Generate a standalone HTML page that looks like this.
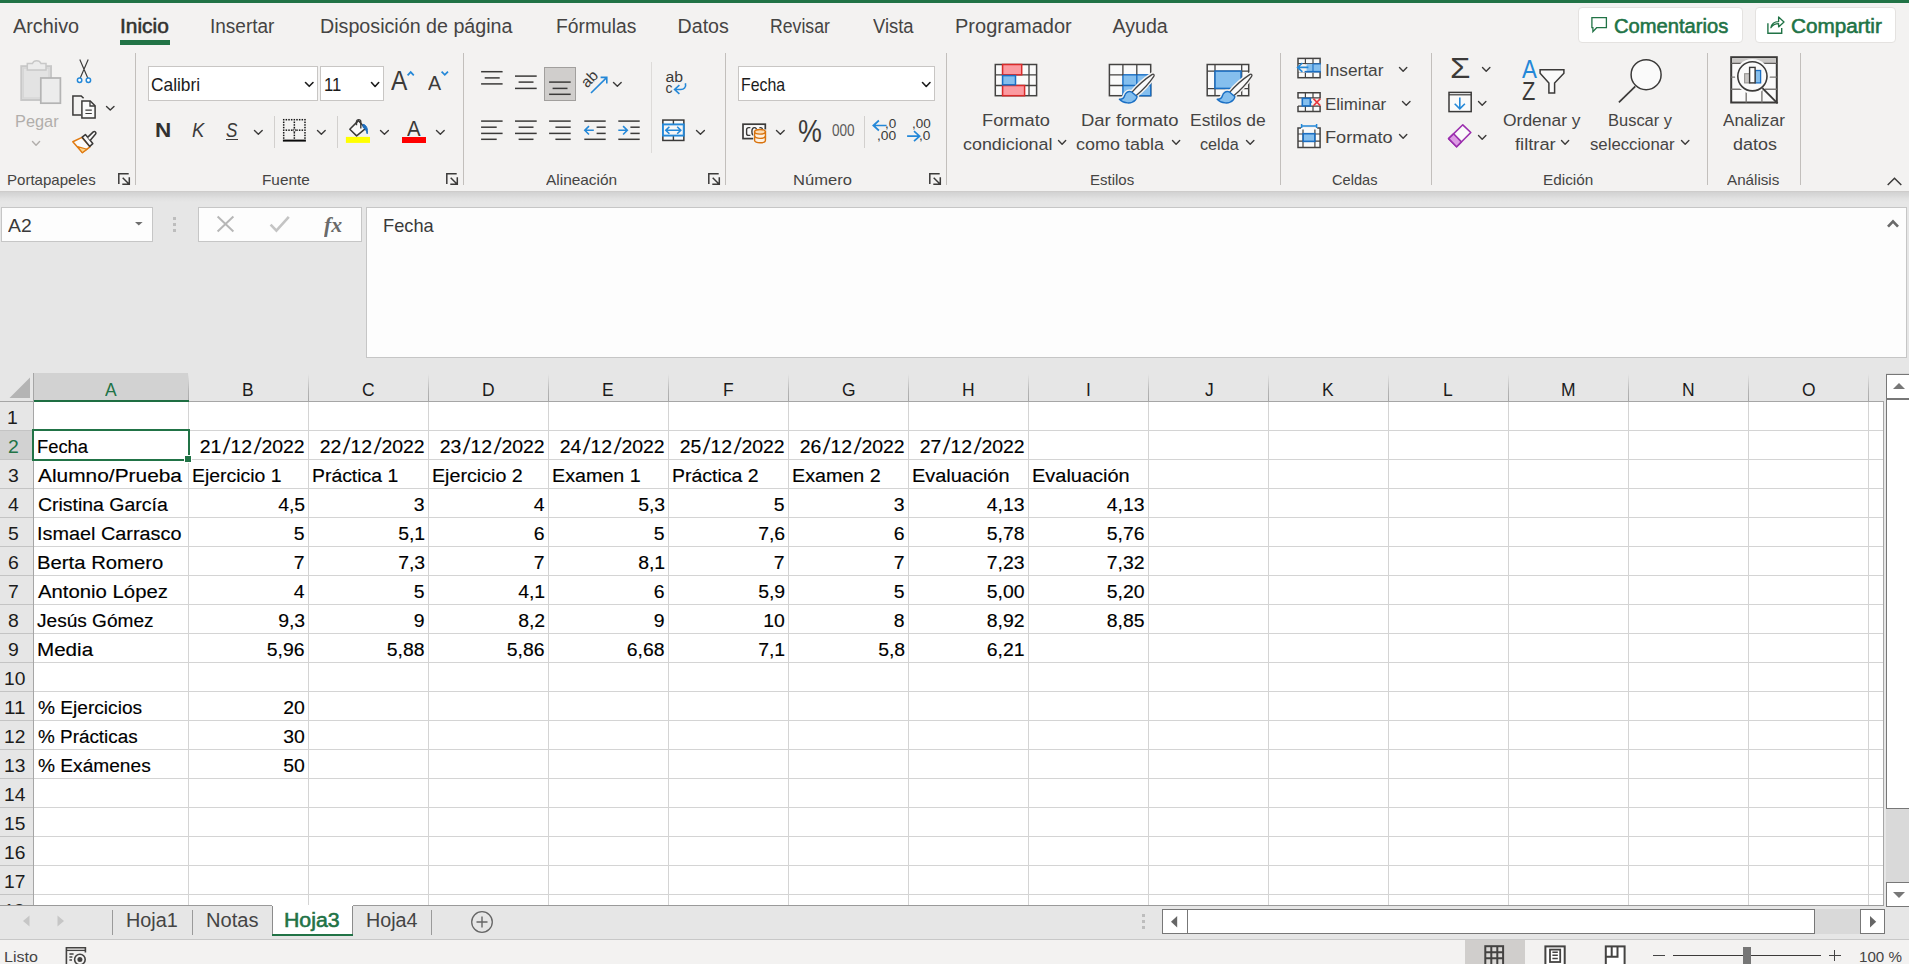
<!DOCTYPE html>
<html lang="es"><head><meta charset="utf-8"><title>Excel</title>
<style>
html,body{margin:0;padding:0;}
body{width:1909px;height:964px;overflow:hidden;position:relative;background:#e6e6e6;font-family:"Liberation Sans", "DejaVu Sans", sans-serif;}
.t{position:absolute;white-space:nowrap;line-height:1;transform-origin:0 0;display:block;}
svg{display:block;}
</style></head><body>
<div style="position:absolute;left:0px;top:0px;width:1909px;height:191px;background:#f3f2f1;"></div>
<div style="position:absolute;left:0px;top:0px;width:1909px;height:3px;background:#217346;"></div>
<div style="position:absolute;left:0px;top:191px;width:1909px;height:11px;background:linear-gradient(#cbc9c7,#d3d3d3 14%,#d9d9d9 40%,#e1e1e1 68%,#e6e6e6);"></div>
<div style="position:absolute;left:120px;top:40px;width:50px;height:5px;background:#217346;"></div>
<div style="position:absolute;left:135px;top:53px;width:1px;height:132px;background:#c2bfbc;"></div>
<div style="position:absolute;left:463px;top:53px;width:1px;height:132px;background:#c2bfbc;"></div>
<div style="position:absolute;left:725px;top:53px;width:1px;height:132px;background:#c2bfbc;"></div>
<div style="position:absolute;left:946px;top:53px;width:1px;height:132px;background:#c2bfbc;"></div>
<div style="position:absolute;left:1280px;top:53px;width:1px;height:132px;background:#c2bfbc;"></div>
<div style="position:absolute;left:1431px;top:53px;width:1px;height:132px;background:#c2bfbc;"></div>
<div style="position:absolute;left:1707px;top:53px;width:1px;height:132px;background:#c2bfbc;"></div>
<div style="position:absolute;left:1800px;top:53px;width:1px;height:132px;background:#c2bfbc;"></div>
<div style="position:absolute;left:651px;top:62px;width:1px;height:91px;background:#dddbd9;"></div>
<div style="position:absolute;left:274px;top:116px;width:1px;height:32px;background:#d2d0ce;"></div>
<div style="position:absolute;left:337px;top:116px;width:1px;height:32px;background:#d2d0ce;"></div>
<div style="position:absolute;left:864px;top:116px;width:1px;height:32px;background:#d2d0ce;"></div>
<div style="position:absolute;left:1578px;top:7px;width:165px;height:36px;background:#ffffff;border:1px solid #e4e2e0;box-sizing:border-box;border-radius:4px;"></div>
<div style="position:absolute;left:1755px;top:7px;width:141px;height:36px;background:#ffffff;border:1px solid #e4e2e0;box-sizing:border-box;border-radius:4px;"></div>
<div style="position:absolute;left:148px;top:66px;width:170px;height:35px;background:#ffffff;border:1px solid #c8c6c4;box-sizing:border-box;"></div>
<div style="position:absolute;left:320px;top:66px;width:64px;height:35px;background:#ffffff;border:1px solid #c8c6c4;box-sizing:border-box;"></div>
<div style="position:absolute;left:738px;top:66px;width:197px;height:35px;background:#ffffff;border:1px solid #c8c6c4;box-sizing:border-box;"></div>
<div style="position:absolute;left:544px;top:67px;width:32px;height:34px;background:#d0cecc;border:1px solid #a19f9d;box-sizing:border-box;"></div>
<div style="position:absolute;left:1px;top:207px;width:152px;height:35px;background:#fdfdfd;border:1px solid #c6c6c6;box-sizing:border-box;"></div>
<div style="position:absolute;left:198px;top:207px;width:164px;height:35px;background:#fdfdfd;border:1px solid #c6c6c6;box-sizing:border-box;"></div>
<div style="position:absolute;left:366px;top:207px;width:1541px;height:151px;background:#fdfdfd;border:1px solid #c6c6c6;box-sizing:border-box;"></div>
<div style="position:absolute;left:173px;top:217px;width:3px;height:3px;background:#bdbdbd;"></div>
<div style="position:absolute;left:173px;top:223px;width:3px;height:3px;background:#bdbdbd;"></div>
<div style="position:absolute;left:173px;top:229px;width:3px;height:3px;background:#bdbdbd;"></div>
<div style="position:absolute;left:33px;top:402px;width:1851px;height:504px;background:#ffffff;"></div>
<div style="position:absolute;left:0px;top:373px;width:1884px;height:29px;background:#e6e6e6;"></div>
<div style="position:absolute;left:0px;top:402px;width:33px;height:504px;background:#e6e6e6;"></div>
<div style="position:absolute;left:34px;top:373px;width:154px;height:27px;background:#d2d2d2;"></div>
<div style="position:absolute;left:0px;top:431px;width:33px;height:28px;background:#d2d2d2;"></div>
<div style="position:absolute;left:188px;top:402px;width:1px;height:503px;background:#d4d4d4;"></div>
<div style="position:absolute;left:188px;top:374px;width:1px;height:28px;background:linear-gradient(#e6e6e6,#b4b4b4 60%,#a8a8a8);"></div>
<div style="position:absolute;left:308px;top:402px;width:1px;height:503px;background:#d4d4d4;"></div>
<div style="position:absolute;left:308px;top:374px;width:1px;height:28px;background:linear-gradient(#e6e6e6,#b4b4b4 60%,#a8a8a8);"></div>
<div style="position:absolute;left:428px;top:402px;width:1px;height:503px;background:#d4d4d4;"></div>
<div style="position:absolute;left:428px;top:374px;width:1px;height:28px;background:linear-gradient(#e6e6e6,#b4b4b4 60%,#a8a8a8);"></div>
<div style="position:absolute;left:548px;top:402px;width:1px;height:503px;background:#d4d4d4;"></div>
<div style="position:absolute;left:548px;top:374px;width:1px;height:28px;background:linear-gradient(#e6e6e6,#b4b4b4 60%,#a8a8a8);"></div>
<div style="position:absolute;left:668px;top:402px;width:1px;height:503px;background:#d4d4d4;"></div>
<div style="position:absolute;left:668px;top:374px;width:1px;height:28px;background:linear-gradient(#e6e6e6,#b4b4b4 60%,#a8a8a8);"></div>
<div style="position:absolute;left:788px;top:402px;width:1px;height:503px;background:#d4d4d4;"></div>
<div style="position:absolute;left:788px;top:374px;width:1px;height:28px;background:linear-gradient(#e6e6e6,#b4b4b4 60%,#a8a8a8);"></div>
<div style="position:absolute;left:908px;top:402px;width:1px;height:503px;background:#d4d4d4;"></div>
<div style="position:absolute;left:908px;top:374px;width:1px;height:28px;background:linear-gradient(#e6e6e6,#b4b4b4 60%,#a8a8a8);"></div>
<div style="position:absolute;left:1028px;top:402px;width:1px;height:503px;background:#d4d4d4;"></div>
<div style="position:absolute;left:1028px;top:374px;width:1px;height:28px;background:linear-gradient(#e6e6e6,#b4b4b4 60%,#a8a8a8);"></div>
<div style="position:absolute;left:1148px;top:402px;width:1px;height:503px;background:#d4d4d4;"></div>
<div style="position:absolute;left:1148px;top:374px;width:1px;height:28px;background:linear-gradient(#e6e6e6,#b4b4b4 60%,#a8a8a8);"></div>
<div style="position:absolute;left:1268px;top:402px;width:1px;height:503px;background:#d4d4d4;"></div>
<div style="position:absolute;left:1268px;top:374px;width:1px;height:28px;background:linear-gradient(#e6e6e6,#b4b4b4 60%,#a8a8a8);"></div>
<div style="position:absolute;left:1388px;top:402px;width:1px;height:503px;background:#d4d4d4;"></div>
<div style="position:absolute;left:1388px;top:374px;width:1px;height:28px;background:linear-gradient(#e6e6e6,#b4b4b4 60%,#a8a8a8);"></div>
<div style="position:absolute;left:1508px;top:402px;width:1px;height:503px;background:#d4d4d4;"></div>
<div style="position:absolute;left:1508px;top:374px;width:1px;height:28px;background:linear-gradient(#e6e6e6,#b4b4b4 60%,#a8a8a8);"></div>
<div style="position:absolute;left:1628px;top:402px;width:1px;height:503px;background:#d4d4d4;"></div>
<div style="position:absolute;left:1628px;top:374px;width:1px;height:28px;background:linear-gradient(#e6e6e6,#b4b4b4 60%,#a8a8a8);"></div>
<div style="position:absolute;left:1748px;top:402px;width:1px;height:503px;background:#d4d4d4;"></div>
<div style="position:absolute;left:1748px;top:374px;width:1px;height:28px;background:linear-gradient(#e6e6e6,#b4b4b4 60%,#a8a8a8);"></div>
<div style="position:absolute;left:1868px;top:402px;width:1px;height:503px;background:#d4d4d4;"></div>
<div style="position:absolute;left:1868px;top:374px;width:1px;height:28px;background:linear-gradient(#e6e6e6,#b4b4b4 60%,#a8a8a8);"></div>
<div style="position:absolute;left:34px;top:430px;width:1850px;height:1px;background:#d4d4d4;"></div>
<div style="position:absolute;left:0px;top:430px;width:33px;height:1px;background:#c4c4c4;"></div>
<div style="position:absolute;left:34px;top:459px;width:1850px;height:1px;background:#d4d4d4;"></div>
<div style="position:absolute;left:0px;top:459px;width:33px;height:1px;background:#c4c4c4;"></div>
<div style="position:absolute;left:34px;top:488px;width:1850px;height:1px;background:#d4d4d4;"></div>
<div style="position:absolute;left:0px;top:488px;width:33px;height:1px;background:#c4c4c4;"></div>
<div style="position:absolute;left:34px;top:517px;width:1850px;height:1px;background:#d4d4d4;"></div>
<div style="position:absolute;left:0px;top:517px;width:33px;height:1px;background:#c4c4c4;"></div>
<div style="position:absolute;left:34px;top:546px;width:1850px;height:1px;background:#d4d4d4;"></div>
<div style="position:absolute;left:0px;top:546px;width:33px;height:1px;background:#c4c4c4;"></div>
<div style="position:absolute;left:34px;top:575px;width:1850px;height:1px;background:#d4d4d4;"></div>
<div style="position:absolute;left:0px;top:575px;width:33px;height:1px;background:#c4c4c4;"></div>
<div style="position:absolute;left:34px;top:604px;width:1850px;height:1px;background:#d4d4d4;"></div>
<div style="position:absolute;left:0px;top:604px;width:33px;height:1px;background:#c4c4c4;"></div>
<div style="position:absolute;left:34px;top:633px;width:1850px;height:1px;background:#d4d4d4;"></div>
<div style="position:absolute;left:0px;top:633px;width:33px;height:1px;background:#c4c4c4;"></div>
<div style="position:absolute;left:34px;top:662px;width:1850px;height:1px;background:#d4d4d4;"></div>
<div style="position:absolute;left:0px;top:662px;width:33px;height:1px;background:#c4c4c4;"></div>
<div style="position:absolute;left:34px;top:691px;width:1850px;height:1px;background:#d4d4d4;"></div>
<div style="position:absolute;left:0px;top:691px;width:33px;height:1px;background:#c4c4c4;"></div>
<div style="position:absolute;left:34px;top:720px;width:1850px;height:1px;background:#d4d4d4;"></div>
<div style="position:absolute;left:0px;top:720px;width:33px;height:1px;background:#c4c4c4;"></div>
<div style="position:absolute;left:34px;top:749px;width:1850px;height:1px;background:#d4d4d4;"></div>
<div style="position:absolute;left:0px;top:749px;width:33px;height:1px;background:#c4c4c4;"></div>
<div style="position:absolute;left:34px;top:778px;width:1850px;height:1px;background:#d4d4d4;"></div>
<div style="position:absolute;left:0px;top:778px;width:33px;height:1px;background:#c4c4c4;"></div>
<div style="position:absolute;left:34px;top:807px;width:1850px;height:1px;background:#d4d4d4;"></div>
<div style="position:absolute;left:0px;top:807px;width:33px;height:1px;background:#c4c4c4;"></div>
<div style="position:absolute;left:34px;top:836px;width:1850px;height:1px;background:#d4d4d4;"></div>
<div style="position:absolute;left:0px;top:836px;width:33px;height:1px;background:#c4c4c4;"></div>
<div style="position:absolute;left:34px;top:865px;width:1850px;height:1px;background:#d4d4d4;"></div>
<div style="position:absolute;left:0px;top:865px;width:33px;height:1px;background:#c4c4c4;"></div>
<div style="position:absolute;left:34px;top:894px;width:1850px;height:1px;background:#d4d4d4;"></div>
<div style="position:absolute;left:0px;top:894px;width:33px;height:1px;background:#c4c4c4;"></div>
<div style="position:absolute;left:0px;top:401px;width:1884px;height:1px;background:#a6a6a6;"></div>
<div style="position:absolute;left:33px;top:373px;width:1px;height:533px;background:#a6a6a6;"></div>
<div style="position:absolute;left:34px;top:400px;width:155px;height:2px;background:#1e6e42;"></div>
<div style="position:absolute;left:32px;top:431px;width:2px;height:28px;background:#1e6e42;"></div>
<div style="position:absolute;left:1883px;top:402px;width:1px;height:504px;background:#a6a6a6;"></div>
<div style="position:absolute;left:0px;top:905px;width:1884px;height:1px;background:#9a9a9a;"></div>
<div style="position:absolute;left:32px;top:429px;width:158px;height:32px;border:2px solid #217346;box-sizing:border-box;"></div>
<div style="position:absolute;left:184px;top:455px;width:8px;height:8px;background:#ffffff;"></div>
<div style="position:absolute;left:185px;top:456px;width:6px;height:6px;background:#217346;"></div>
<div style="position:absolute;left:1886px;top:373px;width:23px;height:534px;background:#d9d9d9;"></div>
<div style="position:absolute;left:1886px;top:374px;width:24px;height:25px;background:#ffffff;border:1px solid #777;box-sizing:border-box;"></div>
<div style="position:absolute;left:1886px;top:399px;width:24px;height:410px;background:#ffffff;border:1px solid #777;box-sizing:border-box;"></div>
<div style="position:absolute;left:1886px;top:882px;width:24px;height:25px;background:#ffffff;border:1px solid #777;box-sizing:border-box;"></div>
<div style="position:absolute;left:0px;top:906px;width:1886px;height:33px;background:#e6e6e6;"></div>
<div style="position:absolute;left:1886px;top:907px;width:23px;height:32px;background:#e6e6e6;"></div>
<div style="position:absolute;left:112px;top:910px;width:1px;height:25px;background:#9a9a9a;"></div>
<div style="position:absolute;left:192px;top:910px;width:1px;height:25px;background:#9a9a9a;"></div>
<div style="position:absolute;left:431px;top:910px;width:1px;height:25px;background:#9a9a9a;"></div>
<div style="position:absolute;left:272px;top:905px;width:81px;height:29px;background:#ffffff;"></div>
<div style="position:absolute;left:272px;top:934px;width:81px;height:2px;background:#217346;"></div>
<div style="position:absolute;left:272px;top:906px;width:1px;height:28px;background:#8c8c8c;"></div>
<div style="position:absolute;left:352px;top:906px;width:1px;height:28px;background:#8c8c8c;"></div>
<div style="position:absolute;left:1142px;top:914px;width:3px;height:3px;background:#bdbdbd;"></div>
<div style="position:absolute;left:1142px;top:920px;width:3px;height:3px;background:#bdbdbd;"></div>
<div style="position:absolute;left:1142px;top:926px;width:3px;height:3px;background:#bdbdbd;"></div>
<div style="position:absolute;left:1187px;top:909px;width:698px;height:25px;background:#d9d9d9;"></div>
<div style="position:absolute;left:1162px;top:909px;width:26px;height:25px;background:#ffffff;border:1px solid #777;box-sizing:border-box;"></div>
<div style="position:absolute;left:1187px;top:909px;width:628px;height:25px;background:#ffffff;border:1px solid #777;box-sizing:border-box;"></div>
<div style="position:absolute;left:1860px;top:909px;width:25px;height:25px;background:#ffffff;border:1px solid #777;box-sizing:border-box;"></div>
<div style="position:absolute;left:0px;top:939px;width:1909px;height:25px;background:#f3f2f1;"></div>
<div style="position:absolute;left:0px;top:939px;width:1909px;height:1px;background:#c8c8c8;"></div>
<div style="position:absolute;left:1465px;top:940px;width:60px;height:24px;background:#d0cecc;"></div>
<div style="position:absolute;left:1673px;top:954.5px;width:148px;height:1.6px;background:#3b3a39;"></div>
<div style="position:absolute;left:1743px;top:947px;width:8px;height:17px;background:#767676;"></div>
<div style="position:absolute;left:1653px;top:955px;width:11.5px;height:1.2px;background:#444;"></div>
<div style="position:absolute;left:1829px;top:955px;width:11.5px;height:1.2px;background:#444;"></div>
<div style="position:absolute;left:1834.2px;top:950px;width:1.2px;height:11.2px;background:#444;"></div>
<div style="position:absolute;left:226px;top:139px;width:12px;height:1.4px;background:#3b3a39;"></div>
<div style="position:absolute;left:401.9px;top:136.9px;width:24.2px;height:6px;background:#ff0000;"></div>
<svg style="position:absolute;left:9px;top:377px;overflow:visible;" width="22" height="22" viewBox="0 0 22 22"><path d="M21 0.5V21H0.5Z" fill="#b4b4b4"/></svg>
<svg style="position:absolute;left:1892.5px;top:383px;overflow:visible;" width="11.5" height="6" viewBox="0 0 11.5 6"><path d="M0 6L6 0L12 6Z" fill="#777"/></svg>
<svg style="position:absolute;left:1892.5px;top:892px;overflow:visible;" width="11.5" height="6" viewBox="0 0 11.5 6"><path d="M0 0L6 6L12 0Z" fill="#777"/></svg>
<svg style="position:absolute;left:1887px;top:219px;overflow:visible;" width="12" height="9" viewBox="0 0 12 9"><path d="M1 7.6L6 2.4L11 7.6" fill="none" stroke="#6a6a6a" stroke-width="2.7"/></svg>
<svg style="position:absolute;left:22px;top:915px;overflow:visible;" width="8" height="12" viewBox="0 0 8 12"><path d="M7.5 0.5L1 6L7.5 11.5Z" fill="#c6c6c6"/></svg>
<svg style="position:absolute;left:57px;top:915px;overflow:visible;" width="8" height="12" viewBox="0 0 8 12"><path d="M0.5 0.5L7 6L0.5 11.5Z" fill="#c6c6c6"/></svg>
<svg style="position:absolute;left:470px;top:910px;overflow:visible;" width="24" height="24" viewBox="0 0 24 24"><circle cx="12" cy="12" r="10.3" fill="none" stroke="#666" stroke-width="1.3"/><path d="M12 6.5V17.5M6.5 12H17.5" stroke="#666" stroke-width="1.4"/></svg>
<svg style="position:absolute;left:1170.5px;top:915.5px;overflow:visible;" width="6.2" height="11.6" viewBox="0 0 6.2 11.6"><path d="M6.2 0L0 5.8L6.2 11.6Z" fill="#666"/></svg>
<svg style="position:absolute;left:1870px;top:915.5px;overflow:visible;" width="6.2" height="11.6" viewBox="0 0 6.2 11.6"><path d="M0 0L6.2 5.8L0 11.6Z" fill="#666"/></svg>
<svg style="position:absolute;left:1484px;top:945px;overflow:visible;clip-path:inset(0 0 0 0);" width="21" height="19" viewBox="0 0 21 19"><rect x="1.3" y="1.2" width="17.8" height="19" fill="#dad8d6" stroke="#444342" stroke-width="2"/><path d="M7.3 1.2V20M13.3 1.2V20M1.3 7.2H19.1M1.3 13.2H19.1" stroke="#444342" stroke-width="2" fill="none"/></svg>
<svg style="position:absolute;left:1544px;top:945px;overflow:visible;clip-path:inset(0 0 0 0);" width="23" height="19" viewBox="0 0 23 19"><rect x="1.4" y="1.4" width="19.3" height="20" fill="#fff" stroke="#444342" stroke-width="2"/><rect x="6" y="4.6" width="10.2" height="12.4" fill="#fff" stroke="#444342" stroke-width="1.8"/><path d="M8.4 7.2H13.8M8.4 10.3H13.8M8.4 13.5H13.8" stroke="#444342" stroke-width="1.5"/></svg>
<svg style="position:absolute;left:1604px;top:945px;overflow:visible;clip-path:inset(0 0 0 0);" width="23" height="19" viewBox="0 0 23 19"><rect x="1.8" y="1.4" width="18.8" height="20" fill="#fff" stroke="#444342" stroke-width="2"/><path d="M7.7 1.4V11.8M13.5 1.4V11.8H1.8" stroke="#444342" stroke-width="2" fill="none"/></svg>
<svg style="position:absolute;left:65px;top:946px;overflow:visible;clip-path:inset(0 0 0 0);" width="23" height="18" viewBox="0 0 23 18"><path d="M1.4 18V1.8H20.4V6.5" fill="none" stroke="#444342" stroke-width="1.6"/><path d="M1.4 4.4H20.4" stroke="#444342" stroke-width="1.3"/><path d="M4.4 8H8.6M4.4 11H7.4M4.4 14H7" stroke="#444342" stroke-width="1.3"/><circle cx="14.9" cy="13.5" r="5.3" fill="#f3f2f1" stroke="#444342" stroke-width="1.6"/><circle cx="14.9" cy="13.5" r="2.5" fill="#444342"/></svg>
<svg style="position:absolute;left:118px;top:173.2px;overflow:visible;" width="12" height="12" viewBox="0 0 12 12"><path d="M0.8 11V0.8H10.7M4.7 4.7L11.2 11.2M11.3 4.3V11.3H4.3" fill="none" stroke="#3b3a39" stroke-width="1.5" stroke-linejoin="miter"/></svg>
<svg style="position:absolute;left:446px;top:173.2px;overflow:visible;" width="12" height="12" viewBox="0 0 12 12"><path d="M0.8 11V0.8H10.7M4.7 4.7L11.2 11.2M11.3 4.3V11.3H4.3" fill="none" stroke="#3b3a39" stroke-width="1.5" stroke-linejoin="miter"/></svg>
<svg style="position:absolute;left:708.2px;top:173.2px;overflow:visible;" width="12" height="12" viewBox="0 0 12 12"><path d="M0.8 11V0.8H10.7M4.7 4.7L11.2 11.2M11.3 4.3V11.3H4.3" fill="none" stroke="#3b3a39" stroke-width="1.5" stroke-linejoin="miter"/></svg>
<svg style="position:absolute;left:929.1px;top:173.2px;overflow:visible;" width="12" height="12" viewBox="0 0 12 12"><path d="M0.8 11V0.8H10.7M4.7 4.7L11.2 11.2M11.3 4.3V11.3H4.3" fill="none" stroke="#3b3a39" stroke-width="1.5" stroke-linejoin="miter"/></svg>
<svg style="position:absolute;left:1887px;top:177px;overflow:visible;" width="15" height="9" viewBox="0 0 15 9"><path d="M0.7 8L7.5 1.2L14.3 8" fill="none" stroke="#3b3a39" stroke-width="1.5"/></svg>
<svg style="position:absolute;left:32.2px;top:141.1px;overflow:visible;" width="8.1" height="4.8" viewBox="0 0 8.1 4.8"><path d="M0.5 0.5L4.05 4.20L7.60 0.5" fill="none" stroke="#b1aeab" stroke-width="1.4" stroke-linecap="round" stroke-linejoin="round"/></svg>
<svg style="position:absolute;left:106.3px;top:106.2px;overflow:visible;" width="8.5" height="4.7" viewBox="0 0 8.5 4.7"><path d="M0.5 0.5L4.25 4.10L8.00 0.5" fill="none" stroke="#3b3a39" stroke-width="1.4" stroke-linecap="round" stroke-linejoin="round"/></svg>
<svg style="position:absolute;left:305.0px;top:82.1px;overflow:visible;" width="8.5" height="4.9" viewBox="0 0 8.5 4.9"><path d="M0.5 0.5L4.25 4.30L8.00 0.5" fill="none" stroke="#1b1b1b" stroke-width="1.6" stroke-linecap="round" stroke-linejoin="round"/></svg>
<svg style="position:absolute;left:371.0px;top:81.9px;overflow:visible;" width="8.2" height="5.1" viewBox="0 0 8.2 5.1"><path d="M0.5 0.5L4.10 4.50L7.70 0.5" fill="none" stroke="#1b1b1b" stroke-width="1.6" stroke-linecap="round" stroke-linejoin="round"/></svg>
<svg style="position:absolute;left:922.0px;top:81.9px;overflow:visible;" width="8.5" height="5.1" viewBox="0 0 8.5 5.1"><path d="M0.5 0.5L4.25 4.50L8.00 0.5" fill="none" stroke="#1b1b1b" stroke-width="1.6" stroke-linecap="round" stroke-linejoin="round"/></svg>
<svg style="position:absolute;left:253.9px;top:130.2px;overflow:visible;" width="8.7" height="4.8" viewBox="0 0 8.7 4.8"><path d="M0.5 0.5L4.35 4.20L8.20 0.5" fill="none" stroke="#3b3a39" stroke-width="1.4" stroke-linecap="round" stroke-linejoin="round"/></svg>
<svg style="position:absolute;left:316.8px;top:130.2px;overflow:visible;" width="8.7" height="4.8" viewBox="0 0 8.7 4.8"><path d="M0.5 0.5L4.35 4.20L8.20 0.5" fill="none" stroke="#3b3a39" stroke-width="1.4" stroke-linecap="round" stroke-linejoin="round"/></svg>
<svg style="position:absolute;left:379.6px;top:130.2px;overflow:visible;" width="8.9" height="4.8" viewBox="0 0 8.9 4.8"><path d="M0.5 0.5L4.45 4.20L8.40 0.5" fill="none" stroke="#3b3a39" stroke-width="1.4" stroke-linecap="round" stroke-linejoin="round"/></svg>
<svg style="position:absolute;left:435.8px;top:130.2px;overflow:visible;" width="8.7" height="4.8" viewBox="0 0 8.7 4.8"><path d="M0.5 0.5L4.35 4.20L8.20 0.5" fill="none" stroke="#3b3a39" stroke-width="1.4" stroke-linecap="round" stroke-linejoin="round"/></svg>
<svg style="position:absolute;left:695.9px;top:130.2px;overflow:visible;" width="8.9" height="4.8" viewBox="0 0 8.9 4.8"><path d="M0.5 0.5L4.45 4.20L8.40 0.5" fill="none" stroke="#3b3a39" stroke-width="1.4" stroke-linecap="round" stroke-linejoin="round"/></svg>
<svg style="position:absolute;left:775.7px;top:130.2px;overflow:visible;" width="8.7" height="4.8" viewBox="0 0 8.7 4.8"><path d="M0.5 0.5L4.35 4.20L8.20 0.5" fill="none" stroke="#3b3a39" stroke-width="1.4" stroke-linecap="round" stroke-linejoin="round"/></svg>
<svg style="position:absolute;left:613.1px;top:81.9px;overflow:visible;" width="8.7" height="4.9" viewBox="0 0 8.7 4.9"><path d="M0.5 0.5L4.35 4.30L8.20 0.5" fill="none" stroke="#3b3a39" stroke-width="1.4" stroke-linecap="round" stroke-linejoin="round"/></svg>
<svg style="position:absolute;left:1058px;top:140.3px;overflow:visible;" width="8.2" height="4.9" viewBox="0 0 8.2 4.9"><path d="M0.5 0.5L4.10 4.30L7.70 0.5" fill="none" stroke="#3b3a39" stroke-width="1.4" stroke-linecap="round" stroke-linejoin="round"/></svg>
<svg style="position:absolute;left:1172px;top:140.3px;overflow:visible;" width="8.2" height="4.9" viewBox="0 0 8.2 4.9"><path d="M0.5 0.5L4.10 4.30L7.70 0.5" fill="none" stroke="#3b3a39" stroke-width="1.4" stroke-linecap="round" stroke-linejoin="round"/></svg>
<svg style="position:absolute;left:1246px;top:140.3px;overflow:visible;" width="8.4" height="4.9" viewBox="0 0 8.4 4.9"><path d="M0.5 0.5L4.20 4.30L7.90 0.5" fill="none" stroke="#3b3a39" stroke-width="1.4" stroke-linecap="round" stroke-linejoin="round"/></svg>
<svg style="position:absolute;left:1561.4px;top:140.3px;overflow:visible;" width="8.2" height="4.9" viewBox="0 0 8.2 4.9"><path d="M0.5 0.5L4.10 4.30L7.70 0.5" fill="none" stroke="#3b3a39" stroke-width="1.4" stroke-linecap="round" stroke-linejoin="round"/></svg>
<svg style="position:absolute;left:1681.4px;top:140.3px;overflow:visible;" width="8.4" height="4.9" viewBox="0 0 8.4 4.9"><path d="M0.5 0.5L4.20 4.30L7.90 0.5" fill="none" stroke="#3b3a39" stroke-width="1.4" stroke-linecap="round" stroke-linejoin="round"/></svg>
<svg style="position:absolute;left:1398.9px;top:66.9px;overflow:visible;" width="8.3" height="4.8" viewBox="0 0 8.3 4.8"><path d="M0.5 0.5L4.15 4.20L7.80 0.5" fill="none" stroke="#3b3a39" stroke-width="1.4" stroke-linecap="round" stroke-linejoin="round"/></svg>
<svg style="position:absolute;left:1401.9px;top:100.5px;overflow:visible;" width="8.5" height="4.8" viewBox="0 0 8.5 4.8"><path d="M0.5 0.5L4.25 4.20L8.00 0.5" fill="none" stroke="#3b3a39" stroke-width="1.4" stroke-linecap="round" stroke-linejoin="round"/></svg>
<svg style="position:absolute;left:1398.9px;top:134.3px;overflow:visible;" width="8.3" height="4.8" viewBox="0 0 8.3 4.8"><path d="M0.5 0.5L4.15 4.20L7.80 0.5" fill="none" stroke="#3b3a39" stroke-width="1.4" stroke-linecap="round" stroke-linejoin="round"/></svg>
<svg style="position:absolute;left:1481.9px;top:66.9px;overflow:visible;" width="8.4" height="4.8" viewBox="0 0 8.4 4.8"><path d="M0.5 0.5L4.20 4.20L7.90 0.5" fill="none" stroke="#3b3a39" stroke-width="1.4" stroke-linecap="round" stroke-linejoin="round"/></svg>
<svg style="position:absolute;left:1478.2px;top:100.9px;overflow:visible;" width="8.4" height="4.8" viewBox="0 0 8.4 4.8"><path d="M0.5 0.5L4.20 4.20L7.90 0.5" fill="none" stroke="#3b3a39" stroke-width="1.4" stroke-linecap="round" stroke-linejoin="round"/></svg>
<svg style="position:absolute;left:1478.2px;top:135.2px;overflow:visible;" width="8.4" height="4.8" viewBox="0 0 8.4 4.8"><path d="M0.5 0.5L4.20 4.20L7.90 0.5" fill="none" stroke="#3b3a39" stroke-width="1.4" stroke-linecap="round" stroke-linejoin="round"/></svg>
<svg style="position:absolute;left:19px;top:58px;overflow:visible;" width="44" height="48" viewBox="0 0 44 48">
<rect x="2.3" y="8.2" width="29.7" height="33.8" fill="#e3e3e3" stroke="#c8c8c8" stroke-width="2"/>
<rect x="4.3" y="10.2" width="25.7" height="29.8" fill="none" stroke="#d6d6d6" stroke-width="1.4"/>
<path d="M8.3 12V5.6H13.4A4.6 4.6 0 0 1 22 5.6H27V12Z" fill="#ececec" stroke="#c8c8c8" stroke-width="1.5"/>
<rect x="21.8" y="20" width="19.6" height="25.2" fill="#ececec" stroke="#b4b4b4" stroke-width="1.7"/>
</svg>
<svg style="position:absolute;left:75px;top:58px;overflow:visible;" width="18" height="26" viewBox="0 0 18 26">
<path d="M4.8 1.6L13.2 21M13.2 1.6L4.8 21" stroke="#3b3a39" stroke-width="1.15" fill="none"/>
<circle cx="4.6" cy="22.3" r="2.2" fill="#fff" stroke="#2488d8" stroke-width="1.5"/>
<circle cx="13.4" cy="22.3" r="2.2" fill="#fff" stroke="#2488d8" stroke-width="1.5"/>
</svg>
<svg style="position:absolute;left:71px;top:94px;overflow:visible;" width="26" height="26" viewBox="0 0 26 26">
<path d="M10.2 21.1H1.9V1.9H10.2L12.6 4.3" fill="none" stroke="#3b3a39" stroke-width="1.5"/>
<path d="M10.9 6.9H19.2L24.1 11.8V24H10.9Z" fill="#fafafa" stroke="#3b3a39" stroke-width="1.5" stroke-linejoin="miter"/>
<path d="M19 7V12H24" fill="none" stroke="#3b3a39" stroke-width="1.3"/>
<path d="M14.4 16.2H20.8M14.4 19.5H20.8" stroke="#3b3a39" stroke-width="1.2"/>
</svg>
<svg style="position:absolute;left:71px;top:130px;overflow:visible;" width="27" height="25" viewBox="0 0 27 25">
<path d="M1.8 11.8L11 7.4L19 16.8L11.3 22.6Z" fill="#fafafa" stroke="#e07a10" stroke-width="1.5" stroke-linejoin="round"/>
<path d="M6.6 16.6L16 19.2L11.3 22.6Z" fill="#fbd58a" stroke="#e07a10" stroke-width="1.1" stroke-linejoin="round"/>
<path d="M11.2 7.2L14.4 4.6L21.8 13.6L18.8 16.4Z" fill="#fafafa" stroke="#3b3a39" stroke-width="1.5" stroke-linejoin="round"/>
<path d="M16.6 7.4L22.3 1.9A1.6 1.6 0 0 1 24.6 4.1L19.3 10.2" fill="#fafafa" stroke="#3b3a39" stroke-width="1.5" stroke-linejoin="round"/>
</svg>
<svg style="position:absolute;left:406.9px;top:71.0px;overflow:visible;" width="7.4" height="5" viewBox="0 0 7.4 5"><path d="M0.6 4.4L3.7 1.1L6.8 4.4" fill="none" stroke="#2488d8" stroke-width="1.7"/></svg>
<svg style="position:absolute;left:440.7px;top:71.3px;overflow:visible;" width="7.6" height="5" viewBox="0 0 7.6 5"><path d="M0.6 0.6L3.8 3.9L7 0.6" fill="none" stroke="#2488d8" stroke-width="1.7"/></svg>
<svg style="position:absolute;left:282px;top:118px;overflow:visible;" width="25" height="25" viewBox="0 0 25 25"><rect x="0.95" y="0.95" width="1.5" height="1.5" fill="#161616"/><rect x="0.95" y="3.57" width="1.5" height="1.5" fill="#161616"/><rect x="0.95" y="6.19" width="1.5" height="1.5" fill="#161616"/><rect x="0.95" y="8.81" width="1.5" height="1.5" fill="#161616"/><rect x="0.95" y="11.43" width="1.5" height="1.5" fill="#161616"/><rect x="0.95" y="14.05" width="1.5" height="1.5" fill="#161616"/><rect x="0.95" y="16.67" width="1.5" height="1.5" fill="#161616"/><rect x="0.95" y="19.29" width="1.5" height="1.5" fill="#161616"/><rect x="3.61" y="0.95" width="1.5" height="1.5" fill="#161616"/><rect x="3.61" y="11.43" width="1.5" height="1.5" fill="#161616"/><rect x="6.27" y="0.95" width="1.5" height="1.5" fill="#161616"/><rect x="6.27" y="11.43" width="1.5" height="1.5" fill="#161616"/><rect x="8.93" y="0.95" width="1.5" height="1.5" fill="#161616"/><rect x="8.93" y="11.43" width="1.5" height="1.5" fill="#161616"/><rect x="11.59" y="0.95" width="1.5" height="1.5" fill="#161616"/><rect x="11.59" y="3.57" width="1.5" height="1.5" fill="#161616"/><rect x="11.59" y="6.19" width="1.5" height="1.5" fill="#161616"/><rect x="11.59" y="8.81" width="1.5" height="1.5" fill="#161616"/><rect x="11.59" y="11.43" width="1.5" height="1.5" fill="#161616"/><rect x="11.59" y="14.05" width="1.5" height="1.5" fill="#161616"/><rect x="11.59" y="16.67" width="1.5" height="1.5" fill="#161616"/><rect x="11.59" y="19.29" width="1.5" height="1.5" fill="#161616"/><rect x="14.25" y="0.95" width="1.5" height="1.5" fill="#161616"/><rect x="14.25" y="11.43" width="1.5" height="1.5" fill="#161616"/><rect x="16.91" y="0.95" width="1.5" height="1.5" fill="#161616"/><rect x="16.91" y="11.43" width="1.5" height="1.5" fill="#161616"/><rect x="19.57" y="0.95" width="1.5" height="1.5" fill="#161616"/><rect x="19.57" y="11.43" width="1.5" height="1.5" fill="#161616"/><rect x="22.23" y="0.95" width="1.5" height="1.5" fill="#161616"/><rect x="22.23" y="3.57" width="1.5" height="1.5" fill="#161616"/><rect x="22.23" y="6.19" width="1.5" height="1.5" fill="#161616"/><rect x="22.23" y="8.81" width="1.5" height="1.5" fill="#161616"/><rect x="22.23" y="11.43" width="1.5" height="1.5" fill="#161616"/><rect x="22.23" y="14.05" width="1.5" height="1.5" fill="#161616"/><rect x="22.23" y="16.67" width="1.5" height="1.5" fill="#161616"/><rect x="22.23" y="19.29" width="1.5" height="1.5" fill="#161616"/><rect x="0.9" y="21.6" width="23" height="2" fill="#0a0a0a"/><circle cx="12.34" cy="12.18" r="1.3" fill="#f3f2f1" stroke="#2b2a29" stroke-width="0.8"/></svg>
<svg style="position:absolute;left:345px;top:118px;overflow:visible;" width="26" height="26" viewBox="0 0 26 26">
<rect x="0.9" y="18.9" width="24.1" height="6" fill="#ffff00"/>
<path d="M4.8 11.2L13.4 2.6L20.4 10.6L11.6 17.9Z" fill="#fafafa" stroke="#3b3a39" stroke-width="1.5" stroke-linejoin="round"/>
<path d="M11.5 7.2V3.8A2.15 2.15 0 0 1 15.8 3.8V10.4" fill="none" stroke="#3b3a39" stroke-width="1.4"/>
<path d="M17.9 6.3C21.8 6.8 23 11.4 22.2 15.8C21.4 12.6 20.2 10.6 18.2 9.6Z" fill="#1e6fc0" stroke="#1e6fc0" stroke-width="1" stroke-linejoin="round"/>
</svg>
<svg style="position:absolute;left:480px;top:68px;overflow:visible;" width="24" height="22" viewBox="0 0 24 22"><path d="M1.10 3.70H22.60" stroke="#3b3a39" stroke-width="1.5"/><path d="M4.70 9.90H19.70" stroke="#3b3a39" stroke-width="1.5"/><path d="M1.10 15.90H22.60" stroke="#3b3a39" stroke-width="1.5"/></svg>
<svg style="position:absolute;left:514px;top:72px;overflow:visible;" width="24" height="22" viewBox="0 0 24 22"><path d="M1.00 4.10H22.70" stroke="#3b3a39" stroke-width="1.5"/><path d="M4.60 10.10H19.50" stroke="#3b3a39" stroke-width="1.5"/><path d="M1.00 16.40H22.70" stroke="#3b3a39" stroke-width="1.5"/></svg>
<svg style="position:absolute;left:548px;top:78px;overflow:visible;" width="24" height="22" viewBox="0 0 24 22"><path d="M1.10 4.10H22.70" stroke="#3b3a39" stroke-width="1.5"/><path d="M4.60 10.40H19.50" stroke="#3b3a39" stroke-width="1.5"/><path d="M1.10 16.30H22.70" stroke="#3b3a39" stroke-width="1.5"/></svg>
<svg style="position:absolute;left:480px;top:118px;overflow:visible;" width="24" height="24" viewBox="0 0 24 24"><path d="M1.10 3.10H22.60" stroke="#3b3a39" stroke-width="1.5"/><path d="M1.10 9.20H16.70" stroke="#3b3a39" stroke-width="1.5"/><path d="M1.10 15.40H22.60" stroke="#3b3a39" stroke-width="1.5"/><path d="M1.10 21.30H16.70" stroke="#3b3a39" stroke-width="1.5"/></svg>
<svg style="position:absolute;left:514px;top:118px;overflow:visible;" width="24" height="24" viewBox="0 0 24 24"><path d="M1.00 3.10H22.70" stroke="#3b3a39" stroke-width="1.5"/><path d="M4.60 9.20H19.50" stroke="#3b3a39" stroke-width="1.5"/><path d="M1.00 15.40H22.70" stroke="#3b3a39" stroke-width="1.5"/><path d="M4.60 21.30H19.50" stroke="#3b3a39" stroke-width="1.5"/></svg>
<svg style="position:absolute;left:548px;top:118px;overflow:visible;" width="24" height="24" viewBox="0 0 24 24"><path d="M1.10 3.10H22.70" stroke="#3b3a39" stroke-width="1.5"/><path d="M7.40 9.20H22.70" stroke="#3b3a39" stroke-width="1.5"/><path d="M1.10 15.40H22.70" stroke="#3b3a39" stroke-width="1.5"/><path d="M7.40 21.30H22.70" stroke="#3b3a39" stroke-width="1.5"/></svg>
<svg style="position:absolute;left:583px;top:118px;overflow:visible;" width="24" height="24" viewBox="0 0 24 24"><path d="M1.30 3.10H22.70" stroke="#3b3a39" stroke-width="1.5"/><path d="M13.60 9.20H22.70" stroke="#3b3a39" stroke-width="1.5"/><path d="M13.60 15.40H22.70" stroke="#3b3a39" stroke-width="1.5"/><path d="M1.30 21.30H22.70" stroke="#3b3a39" stroke-width="1.5"/></svg>
<svg style="position:absolute;left:617px;top:118px;overflow:visible;" width="24" height="24" viewBox="0 0 24 24"><path d="M1.30 3.10H22.70" stroke="#3b3a39" stroke-width="1.5"/><path d="M13.40 9.20H22.70" stroke="#3b3a39" stroke-width="1.5"/><path d="M13.40 15.40H22.70" stroke="#3b3a39" stroke-width="1.5"/><path d="M1.30 21.30H22.70" stroke="#3b3a39" stroke-width="1.5"/></svg>
<svg style="position:absolute;left:584px;top:125px;overflow:visible;" width="11" height="11" viewBox="0 0 11 11"><path d="M0.8 5.3H9.8M5 1.1L0.8 5.3L5 9.5" fill="none" stroke="#2488d8" stroke-width="1.6"/></svg>
<svg style="position:absolute;left:618px;top:125px;overflow:visible;" width="11" height="11" viewBox="0 0 11 11"><path d="M0.3 5.3H9.3M5.1 1.1L9.3 5.3L5.1 9.5" fill="none" stroke="#2488d8" stroke-width="1.6"/></svg>
<svg style="position:absolute;left:582px;top:69px;overflow:visible;" width="28" height="27" viewBox="0 0 28 27">
<text transform="translate(5.0 19.5) rotate(-45)" font-family="Liberation Sans, sans-serif" font-size="15.2" fill="#3b3a39" textLength="17.2" lengthAdjust="spacingAndGlyphs">ab</text>
<path d="M9 24L24.6 8.6M18.6 8.4H24.8V14.6" fill="none" stroke="#2488d8" stroke-width="1.6"/>
</svg>
<svg style="position:absolute;left:664px;top:69px;overflow:visible;" width="24" height="28" viewBox="0 0 24 28">
<text x="1.4" y="12.9" font-family="Liberation Sans, sans-serif" font-size="14" fill="#3b3a39" textLength="17.6" lengthAdjust="spacingAndGlyphs">ab</text>
<text x="1.4" y="24.1" font-family="Liberation Sans, sans-serif" font-size="14" fill="#3b3a39">c</text>
<path d="M21.4 14.2C22.6 18.6 19.6 20.6 16.6 20.5H10.8M15.4 16.2L10.6 20.5L15.4 24.8" fill="none" stroke="#2488d8" stroke-width="1.6"/>
</svg>
<svg style="position:absolute;left:661px;top:118px;overflow:visible;" width="25" height="24" viewBox="0 0 25 24">
<rect x="1.85" y="2.05" width="21.0" height="20.4" fill="#fafafa" stroke="#3b3a39" stroke-width="1.5"/>
<path d="M12.4 2V22.5" stroke="#3b3a39" stroke-width="1.4"/>
<rect x="1.95" y="6.4" width="20.8" height="11.2" fill="#f6f6f6" stroke="#2488d8" stroke-width="1.9"/>
<path d="M5 12.2H19.6M8.4 8.7L4.8 12.2L8.4 15.7M16.2 8.7L19.8 12.2L16.2 15.7" fill="none" stroke="#2488d8" stroke-width="1.6"/>
</svg>
<svg style="position:absolute;left:741px;top:122px;overflow:visible;" width="27" height="22" viewBox="0 0 27 22">
<rect x="2" y="2.2" width="22.3" height="14.4" fill="#fafafa" stroke="#3b3a39" stroke-width="1.7"/>
<path d="M9.4 5.6H7.6A2 2 0 0 0 5.6 7.6V11.4A2 2 0 0 0 7.6 13.4H9.4" fill="none" stroke="#3b3a39" stroke-width="1.4"/>
<ellipse cx="13.4" cy="9.5" rx="2.5" ry="3.9" fill="none" stroke="#3b3a39" stroke-width="1.4"/>
<path d="M18.4 5.6H19.4A2 2 0 0 1 21.4 7.6V9" fill="none" stroke="#3b3a39" stroke-width="1.4"/>
<path d="M12.2 7.4V20.4H25.6V7.4Z" fill="#f3f2f1"/>
<path d="M13.6 9.8V18.4A5.4 2.3 0 0 0 24.4 18.4V9.8Z" fill="#fdf1e2" stroke="#d9730d" stroke-width="1.4"/>
<ellipse cx="19" cy="9.8" rx="5.4" ry="2.3" fill="#fbdcb4" stroke="#d9730d" stroke-width="1.4"/>
<path d="M13.6 14.1A5.4 2.3 0 0 0 24.4 14.1" fill="none" stroke="#d9730d" stroke-width="1.4"/>
</svg>
<svg style="position:absolute;left:872px;top:119px;overflow:visible;" width="16" height="13" viewBox="0 0 16 13"><path d="M1.3 6.5H14.6M6.9 1.5L1.3 6.5L6.9 11.5" fill="none" stroke="#2488d8" stroke-width="1.7"/></svg>
<svg style="position:absolute;left:906px;top:130px;overflow:visible;" width="15" height="13" viewBox="0 0 15 13"><path d="M1.1 6.2H13.4M8 1.2L13.6 6.2L8 11.2" fill="none" stroke="#2488d8" stroke-width="1.7"/></svg>
<svg style="position:absolute;left:994px;top:62px;overflow:visible;" width="46" height="44" viewBox="0 0 46 44">
<rect x="1.3" y="2.5" width="41.3" height="31.2" fill="#fafafa" stroke="#444342" stroke-width="1.5"/>
<path d="M8.6 2.5V33.7M35 2.5V33.7M1.3 12.8H42.6M1.3 23.5H42.6" stroke="#444342" stroke-width="1.3" fill="none"/>
<rect x="8.6" y="2.5" width="19.1" height="10.3" fill="#fb9aa0" stroke="#d92b2b" stroke-width="1.5"/>
<rect x="8.6" y="23.5" width="22" height="10.2" fill="#fb9aa0" stroke="#d92b2b" stroke-width="1.5"/>
<rect x="8.6" y="13.6" width="12.9" height="9.2" fill="#85bfee" stroke="#1a6fc4" stroke-width="1.5"/>
</svg>
<svg style="position:absolute;left:1108px;top:62px;overflow:visible;" width="48" height="44" viewBox="0 0 48 44">
<rect x="1.4" y="2.5" width="41.3" height="31.2" fill="#fafafa" stroke="#444342" stroke-width="1.5"/>
<rect x="14.9" y="12.8" width="27.8" height="20.9" fill="#85bfee" stroke="#1a6fc4" stroke-width="1.4"/>
<path d="M28.8 12.8V33.7M14.9 23.5H42.7" stroke="#1a6fc4" stroke-width="1.4" fill="none"/>
<path d="M14.9 2.5V12.8M28.8 2.5V12.8M1.4 12.8H14.9M1.4 23.5H14.9" stroke="#444342" stroke-width="1.3" fill="none"/>

<path d="M23.6 30.6C30.2 23 37.8 16.6 43.9 12.6C45.5 11.6 46.8 12.8 45.8 14.3C41.6 20.6 35 27.8 27.6 34Z" fill="none" stroke="#f3f2f1" stroke-width="4.2" stroke-linejoin="round"/>
<path d="M23.4 29.8C19.8 28.6 17.2 31 16.6 33.8C16 36 14 37.4 11.4 37.2C15.4 41.6 23.4 42.4 27.4 38C29.4 35.8 29.2 34 28.6 34.2Z" fill="none" stroke="#f3f2f1" stroke-width="4" stroke-linejoin="round"/>
<path d="M23.6 30.6C30.2 23 37.8 16.6 43.9 12.6C45.5 11.6 46.8 12.8 45.8 14.3C41.6 20.6 35 27.8 27.6 34Z" fill="#fafafa" stroke="#444342" stroke-width="1.3" stroke-linejoin="round"/>
<path d="M23.4 29.8C19.8 28.6 17.2 31 16.6 33.8C16 36 14 37.4 11.4 37.2C15.4 41.6 23.4 42.4 27.4 38C29.4 35.8 29.2 34 28.6 34.2Z" fill="#85bfee" stroke="#1a6fc4" stroke-width="1.4" stroke-linejoin="round"/>

</svg>
<svg style="position:absolute;left:1206px;top:62px;overflow:visible;" width="48" height="44" viewBox="0 0 48 44">
<rect x="1.2" y="2.5" width="41.5" height="31.2" fill="#fafafa" stroke="#444342" stroke-width="1.5"/>
<path d="M9 2.5V33.7M35.7 2.5V33.7M1.2 9.1H42.7M1.2 26.7H42.7" stroke="#444342" stroke-width="1.3" fill="none"/>
<rect x="9" y="9.1" width="26" height="17.3" fill="#85bfee" stroke="#1a6fc4" stroke-width="1.5"/>
<g transform="translate(-0.2 0)">
<path d="M23.6 30.6C30.2 23 37.8 16.6 43.9 12.6C45.5 11.6 46.8 12.8 45.8 14.3C41.6 20.6 35 27.8 27.6 34Z" fill="none" stroke="#f3f2f1" stroke-width="4.2" stroke-linejoin="round"/>
<path d="M23.4 29.8C19.8 28.6 17.2 31 16.6 33.8C16 36 14 37.4 11.4 37.2C15.4 41.6 23.4 42.4 27.4 38C29.4 35.8 29.2 34 28.6 34.2Z" fill="none" stroke="#f3f2f1" stroke-width="4" stroke-linejoin="round"/>
<path d="M23.6 30.6C30.2 23 37.8 16.6 43.9 12.6C45.5 11.6 46.8 12.8 45.8 14.3C41.6 20.6 35 27.8 27.6 34Z" fill="#fafafa" stroke="#444342" stroke-width="1.3" stroke-linejoin="round"/>
<path d="M23.4 29.8C19.8 28.6 17.2 31 16.6 33.8C16 36 14 37.4 11.4 37.2C15.4 41.6 23.4 42.4 27.4 38C29.4 35.8 29.2 34 28.6 34.2Z" fill="#85bfee" stroke="#1a6fc4" stroke-width="1.4" stroke-linejoin="round"/>
</g>
</svg>
<svg style="position:absolute;left:1296px;top:56px;overflow:visible;" width="26" height="24" viewBox="0 0 26 24">
<rect x="2" y="2.4" width="22.1" height="19.3" fill="#fafafa" stroke="#444342" stroke-width="1.5"/>
<path d="M9.4 2.4V21.7M17 2.4V21.7M2 7.6H24.1M2 16.2H24.1" stroke="#444342" stroke-width="1.2" fill="none"/>
<rect x="2.8" y="8.2" width="20.6" height="8.4" fill="#f3f2f1"/>
<rect x="10.6" y="7.8" width="14.2" height="8" fill="#85bfee"/>
<path d="M17 7.8V15.8" stroke="#1a6fc4" stroke-width="1.1"/>
<path d="M8.6 15.7H24.9" stroke="#1a6fc4" stroke-width="1.6"/>
<path d="M17.4 7.9H24.9" stroke="#1a6fc4" stroke-width="1.2"/>
<path d="M1.6 11.4H12.4M6.4 7L1.6 11.4L6.4 15.8" fill="none" stroke="#2488d8" stroke-width="1.6"/>
</svg>
<svg style="position:absolute;left:1296px;top:90px;overflow:visible;" width="26" height="24" viewBox="0 0 26 24">
<path d="M2 8.4V2.7H24.1V8.4M2 16V21.6H24.1V16" fill="#fafafa" stroke="#444342" stroke-width="1.5"/>
<path d="M9.4 2.7V7.6M17 2.7V7.6M9.4 16.4V21.6M17 16.4V21.6M2 7.8H24.1M2 16.2H24.1" stroke="#444342" stroke-width="1.2" fill="none"/>
<rect x="6.3" y="8.3" width="8" height="7.6" fill="#85bfee" stroke="#1a6fc4" stroke-width="1.6"/>
<path d="M14.6 10.2L16.2 12.1L14.6 14Z" fill="#1a6fc4"/>
<path d="M17.4 8.6L24.4 15.8M24.4 8.6L17.4 15.8" stroke="#e8353b" stroke-width="1.6" fill="none"/>
</svg>
<svg style="position:absolute;left:1296px;top:123px;overflow:visible;" width="26" height="26" viewBox="0 0 26 26">
<path d="M5 4.9H2V24.4H24.1V4.9H21.2" fill="#fafafa" stroke="#444342" stroke-width="1.5"/>
<path d="M7 6.4V24.4M18.9 6.4V24.4M2 11H24.1M2 18.2H24.1" stroke="#444342" stroke-width="1.2" fill="none"/>
<rect x="7.2" y="10.7" width="11.6" height="7.7" fill="#85bfee" stroke="#1a6fc4" stroke-width="1.6"/>
<path d="M5.6 2.9H20.6M5.6 0.9V5.1M20.6 0.9V5.1" stroke="#2488d8" stroke-width="1.5" fill="none"/>
</svg>
<svg style="position:absolute;left:1447px;top:90px;overflow:visible;" width="26" height="24" viewBox="0 0 26 24">
<rect x="2" y="2.4" width="22.2" height="19.2" fill="#fafafa" stroke="#3b3a39" stroke-width="1.5"/>
<path d="M2 4.8H24.2" stroke="#3b3a39" stroke-width="1.2"/>
<path d="M12.8 7.6V18.6M7.7 13.7L12.8 18.8L17.9 13.7" fill="none" stroke="#2488d8" stroke-width="1.6"/>
</svg>
<svg style="position:absolute;left:1447px;top:123px;overflow:visible;" width="26" height="26" viewBox="0 0 26 26">
<path d="M15.8 1.8L23.8 9.5L9.6 23.8L1.6 15.6Z" fill="#fafafa" stroke="#9b2fae" stroke-width="1.6" stroke-linejoin="round"/>
<path d="M6.6 10.8L14.4 18.9L9.6 23.8L1.6 15.6Z" fill="#dc9be4" stroke="#9b2fae" stroke-width="1.6" stroke-linejoin="round"/>
</svg>
<svg style="position:absolute;left:1539px;top:68px;overflow:visible;" width="26" height="27" viewBox="0 0 26 27"><path d="M1.1 1.8H24.9V5.3L15.6 15.1V25H9.9V15.1L1.1 5.3Z" fill="#fafafa" stroke="#3b3a39" stroke-width="1.5" stroke-linejoin="miter"/></svg>
<svg style="position:absolute;left:1617px;top:58px;overflow:visible;" width="48" height="46" viewBox="0 0 48 46">
<path d="M18.3 28.3L1.9 44.3" stroke="#3b3a39" stroke-width="1.7"/>
<circle cx="29.1" cy="16.7" r="15" fill="#fafafa" stroke="#3b3a39" stroke-width="1.5"/>
</svg>
<svg style="position:absolute;left:1729px;top:55px;overflow:visible;" width="50" height="50" viewBox="0 0 50 50">
<rect x="2.2" y="2.2" width="45.6" height="45.3" fill="#fafafa" stroke="#3b3a39" stroke-width="2"/>
<rect x="3.2" y="3.2" width="43.6" height="4.8" fill="#c8c6c4"/>
<path d="M2.2 8.4H47.8" stroke="#605e5c" stroke-width="1.4"/>
<path d="M2.2 22.1H47.8M2.2 34.2H47.8M17.2 34.2V47.5M32.9 34.2V47.5" stroke="#7a7876" stroke-width="1.4" fill="none"/>
<circle cx="23.4" cy="21.3" r="17.4" fill="#fafafa"/>
<path d="M33.4 33.1L48.6 48.3" stroke="#3b3a39" stroke-width="1.9"/>
<circle cx="23.4" cy="21.3" r="14.6" fill="#fafafa" stroke="#3b3a39" stroke-width="1.6"/>
<rect x="15.6" y="18.7" width="5" height="9.2" fill="#c8c6c4" stroke="#979593" stroke-width="1.1"/>
<rect x="26.2" y="15.5" width="5.4" height="12.4" fill="#85bfee" stroke="#1a6fc4" stroke-width="1.3"/>
<rect x="20.6" y="12.4" width="5.5" height="15.5" fill="#ffffff" stroke="#3b3a39" stroke-width="1.4"/>
</svg>
<svg style="position:absolute;left:1590px;top:16px;overflow:visible;" width="18" height="18" viewBox="0 0 18 18"><path d="M1.9 1.6H16.4V11.7H6.6L2.9 15.7V11.7H1.9Z" fill="none" stroke="#217346" stroke-width="1.3" stroke-linejoin="miter"/></svg>
<svg style="position:absolute;left:1766px;top:15px;overflow:visible;" width="20" height="20" viewBox="0 0 20 20">
<path d="M1.9 8.2V18.3H15.7V13" fill="none" stroke="#217346" stroke-width="1.4"/>
<path d="M4.9 12.8C5.6 8.6 8.6 6.6 12.6 6.6V1.9L18 6.9L12.6 11.9V8.6C9.4 8.6 6.6 9.8 4.9 12.8Z" fill="none" stroke="#217346" stroke-width="1.3" stroke-linejoin="round"/>
</svg>
<svg style="position:absolute;left:216px;top:215px;overflow:visible;" width="19" height="18" viewBox="0 0 19 18"><path d="M1.6 1.6L17.4 16.4M17.4 1.6L1.6 16.4" stroke="#b7b7b7" stroke-width="2" fill="none"/></svg>
<svg style="position:absolute;left:269px;top:215px;overflow:visible;" width="22" height="18" viewBox="0 0 22 18"><path d="M1.6 9.6L7.4 15.6L19.8 1.8" stroke="#c4c4c4" stroke-width="2.6" fill="none"/></svg>
<svg style="position:absolute;left:134.5px;top:222px;overflow:visible;" width="8" height="4" viewBox="0 0 8 4"><path d="M0 0H7.6L3.8 3.6Z" fill="#6e6e6e"/></svg>
<span class="t" style="right:1604.20px;top:438px;font-size:18.8px;color:#000000;-webkit-text-stroke:0.15px #000;transform-origin:100% 0;transform:scaleX(1.033);">21<span style="display:inline-block;margin:0 1.9px;transform:skewX(-8deg) scaleY(1.22);transform-origin:50% 60%">/</span>12<span style="display:inline-block;margin:0 1.9px;transform:skewX(-8deg) scaleY(1.22);transform-origin:50% 60%">/</span>2022</span>
<span class="t" style="right:1484.20px;top:438px;font-size:18.8px;color:#000000;-webkit-text-stroke:0.15px #000;transform-origin:100% 0;transform:scaleX(1.033);">22<span style="display:inline-block;margin:0 1.9px;transform:skewX(-8deg) scaleY(1.22);transform-origin:50% 60%">/</span>12<span style="display:inline-block;margin:0 1.9px;transform:skewX(-8deg) scaleY(1.22);transform-origin:50% 60%">/</span>2022</span>
<span class="t" style="right:1364.20px;top:438px;font-size:18.8px;color:#000000;-webkit-text-stroke:0.15px #000;transform-origin:100% 0;transform:scaleX(1.033);">23<span style="display:inline-block;margin:0 1.9px;transform:skewX(-8deg) scaleY(1.22);transform-origin:50% 60%">/</span>12<span style="display:inline-block;margin:0 1.9px;transform:skewX(-8deg) scaleY(1.22);transform-origin:50% 60%">/</span>2022</span>
<span class="t" style="right:1244.20px;top:438px;font-size:18.8px;color:#000000;-webkit-text-stroke:0.15px #000;transform-origin:100% 0;transform:scaleX(1.033);">24<span style="display:inline-block;margin:0 1.9px;transform:skewX(-8deg) scaleY(1.22);transform-origin:50% 60%">/</span>12<span style="display:inline-block;margin:0 1.9px;transform:skewX(-8deg) scaleY(1.22);transform-origin:50% 60%">/</span>2022</span>
<span class="t" style="right:1124.20px;top:438px;font-size:18.8px;color:#000000;-webkit-text-stroke:0.15px #000;transform-origin:100% 0;transform:scaleX(1.033);">25<span style="display:inline-block;margin:0 1.9px;transform:skewX(-8deg) scaleY(1.22);transform-origin:50% 60%">/</span>12<span style="display:inline-block;margin:0 1.9px;transform:skewX(-8deg) scaleY(1.22);transform-origin:50% 60%">/</span>2022</span>
<span class="t" style="right:1004.20px;top:438px;font-size:18.8px;color:#000000;-webkit-text-stroke:0.15px #000;transform-origin:100% 0;transform:scaleX(1.033);">26<span style="display:inline-block;margin:0 1.9px;transform:skewX(-8deg) scaleY(1.22);transform-origin:50% 60%">/</span>12<span style="display:inline-block;margin:0 1.9px;transform:skewX(-8deg) scaleY(1.22);transform-origin:50% 60%">/</span>2022</span>
<span class="t" style="right:884.20px;top:438px;font-size:18.8px;color:#000000;-webkit-text-stroke:0.15px #000;transform-origin:100% 0;transform:scaleX(1.033);">27<span style="display:inline-block;margin:0 1.9px;transform:skewX(-8deg) scaleY(1.22);transform-origin:50% 60%">/</span>12<span style="display:inline-block;margin:0 1.9px;transform:skewX(-8deg) scaleY(1.22);transform-origin:50% 60%">/</span>2022</span>
<span class="t" style="right:1604.20px;top:496px;font-size:18.8px;color:#000000;-webkit-text-stroke:0.15px #000;transform-origin:100% 0;transform:scaleX(1.033);">4,5</span>
<span class="t" style="right:1484.20px;top:496px;font-size:18.8px;color:#000000;-webkit-text-stroke:0.15px #000;transform-origin:100% 0;transform:scaleX(1.033);">3</span>
<span class="t" style="right:1364.20px;top:496px;font-size:18.8px;color:#000000;-webkit-text-stroke:0.15px #000;transform-origin:100% 0;transform:scaleX(1.033);">4</span>
<span class="t" style="right:1244.20px;top:496px;font-size:18.8px;color:#000000;-webkit-text-stroke:0.15px #000;transform-origin:100% 0;transform:scaleX(1.033);">5,3</span>
<span class="t" style="right:1124.20px;top:496px;font-size:18.8px;color:#000000;-webkit-text-stroke:0.15px #000;transform-origin:100% 0;transform:scaleX(1.033);">5</span>
<span class="t" style="right:1004.20px;top:496px;font-size:18.8px;color:#000000;-webkit-text-stroke:0.15px #000;transform-origin:100% 0;transform:scaleX(1.033);">3</span>
<span class="t" style="right:884.20px;top:496px;font-size:18.8px;color:#000000;-webkit-text-stroke:0.15px #000;transform-origin:100% 0;transform:scaleX(1.033);">4,13</span>
<span class="t" style="right:764.20px;top:496px;font-size:18.8px;color:#000000;-webkit-text-stroke:0.15px #000;transform-origin:100% 0;transform:scaleX(1.033);">4,13</span>
<span class="t" style="right:1604.20px;top:525px;font-size:18.8px;color:#000000;-webkit-text-stroke:0.15px #000;transform-origin:100% 0;transform:scaleX(1.033);">5</span>
<span class="t" style="right:1484.20px;top:525px;font-size:18.8px;color:#000000;-webkit-text-stroke:0.15px #000;transform-origin:100% 0;transform:scaleX(1.033);">5,1</span>
<span class="t" style="right:1364.20px;top:525px;font-size:18.8px;color:#000000;-webkit-text-stroke:0.15px #000;transform-origin:100% 0;transform:scaleX(1.033);">6</span>
<span class="t" style="right:1244.20px;top:525px;font-size:18.8px;color:#000000;-webkit-text-stroke:0.15px #000;transform-origin:100% 0;transform:scaleX(1.033);">5</span>
<span class="t" style="right:1124.20px;top:525px;font-size:18.8px;color:#000000;-webkit-text-stroke:0.15px #000;transform-origin:100% 0;transform:scaleX(1.033);">7,6</span>
<span class="t" style="right:1004.20px;top:525px;font-size:18.8px;color:#000000;-webkit-text-stroke:0.15px #000;transform-origin:100% 0;transform:scaleX(1.033);">6</span>
<span class="t" style="right:884.20px;top:525px;font-size:18.8px;color:#000000;-webkit-text-stroke:0.15px #000;transform-origin:100% 0;transform:scaleX(1.033);">5,78</span>
<span class="t" style="right:764.20px;top:525px;font-size:18.8px;color:#000000;-webkit-text-stroke:0.15px #000;transform-origin:100% 0;transform:scaleX(1.033);">5,76</span>
<span class="t" style="right:1604.20px;top:554px;font-size:18.8px;color:#000000;-webkit-text-stroke:0.15px #000;transform-origin:100% 0;transform:scaleX(1.033);">7</span>
<span class="t" style="right:1484.20px;top:554px;font-size:18.8px;color:#000000;-webkit-text-stroke:0.15px #000;transform-origin:100% 0;transform:scaleX(1.033);">7,3</span>
<span class="t" style="right:1364.20px;top:554px;font-size:18.8px;color:#000000;-webkit-text-stroke:0.15px #000;transform-origin:100% 0;transform:scaleX(1.033);">7</span>
<span class="t" style="right:1244.20px;top:554px;font-size:18.8px;color:#000000;-webkit-text-stroke:0.15px #000;transform-origin:100% 0;transform:scaleX(1.033);">8,1</span>
<span class="t" style="right:1124.20px;top:554px;font-size:18.8px;color:#000000;-webkit-text-stroke:0.15px #000;transform-origin:100% 0;transform:scaleX(1.033);">7</span>
<span class="t" style="right:1004.20px;top:554px;font-size:18.8px;color:#000000;-webkit-text-stroke:0.15px #000;transform-origin:100% 0;transform:scaleX(1.033);">7</span>
<span class="t" style="right:884.20px;top:554px;font-size:18.8px;color:#000000;-webkit-text-stroke:0.15px #000;transform-origin:100% 0;transform:scaleX(1.033);">7,23</span>
<span class="t" style="right:764.20px;top:554px;font-size:18.8px;color:#000000;-webkit-text-stroke:0.15px #000;transform-origin:100% 0;transform:scaleX(1.033);">7,32</span>
<span class="t" style="right:1604.20px;top:583px;font-size:18.8px;color:#000000;-webkit-text-stroke:0.15px #000;transform-origin:100% 0;transform:scaleX(1.033);">4</span>
<span class="t" style="right:1484.20px;top:583px;font-size:18.8px;color:#000000;-webkit-text-stroke:0.15px #000;transform-origin:100% 0;transform:scaleX(1.033);">5</span>
<span class="t" style="right:1364.20px;top:583px;font-size:18.8px;color:#000000;-webkit-text-stroke:0.15px #000;transform-origin:100% 0;transform:scaleX(1.033);">4,1</span>
<span class="t" style="right:1244.20px;top:583px;font-size:18.8px;color:#000000;-webkit-text-stroke:0.15px #000;transform-origin:100% 0;transform:scaleX(1.033);">6</span>
<span class="t" style="right:1124.20px;top:583px;font-size:18.8px;color:#000000;-webkit-text-stroke:0.15px #000;transform-origin:100% 0;transform:scaleX(1.033);">5,9</span>
<span class="t" style="right:1004.20px;top:583px;font-size:18.8px;color:#000000;-webkit-text-stroke:0.15px #000;transform-origin:100% 0;transform:scaleX(1.033);">5</span>
<span class="t" style="right:884.20px;top:583px;font-size:18.8px;color:#000000;-webkit-text-stroke:0.15px #000;transform-origin:100% 0;transform:scaleX(1.033);">5,00</span>
<span class="t" style="right:764.20px;top:583px;font-size:18.8px;color:#000000;-webkit-text-stroke:0.15px #000;transform-origin:100% 0;transform:scaleX(1.033);">5,20</span>
<span class="t" style="right:1604.20px;top:612px;font-size:18.8px;color:#000000;-webkit-text-stroke:0.15px #000;transform-origin:100% 0;transform:scaleX(1.033);">9,3</span>
<span class="t" style="right:1484.20px;top:612px;font-size:18.8px;color:#000000;-webkit-text-stroke:0.15px #000;transform-origin:100% 0;transform:scaleX(1.033);">9</span>
<span class="t" style="right:1364.20px;top:612px;font-size:18.8px;color:#000000;-webkit-text-stroke:0.15px #000;transform-origin:100% 0;transform:scaleX(1.033);">8,2</span>
<span class="t" style="right:1244.20px;top:612px;font-size:18.8px;color:#000000;-webkit-text-stroke:0.15px #000;transform-origin:100% 0;transform:scaleX(1.033);">9</span>
<span class="t" style="right:1124.20px;top:612px;font-size:18.8px;color:#000000;-webkit-text-stroke:0.15px #000;transform-origin:100% 0;transform:scaleX(1.033);">10</span>
<span class="t" style="right:1004.20px;top:612px;font-size:18.8px;color:#000000;-webkit-text-stroke:0.15px #000;transform-origin:100% 0;transform:scaleX(1.033);">8</span>
<span class="t" style="right:884.20px;top:612px;font-size:18.8px;color:#000000;-webkit-text-stroke:0.15px #000;transform-origin:100% 0;transform:scaleX(1.033);">8,92</span>
<span class="t" style="right:764.20px;top:612px;font-size:18.8px;color:#000000;-webkit-text-stroke:0.15px #000;transform-origin:100% 0;transform:scaleX(1.033);">8,85</span>
<span class="t" style="right:1604.20px;top:641px;font-size:18.8px;color:#000000;-webkit-text-stroke:0.15px #000;transform-origin:100% 0;transform:scaleX(1.033);">5,96</span>
<span class="t" style="right:1484.20px;top:641px;font-size:18.8px;color:#000000;-webkit-text-stroke:0.15px #000;transform-origin:100% 0;transform:scaleX(1.033);">5,88</span>
<span class="t" style="right:1364.20px;top:641px;font-size:18.8px;color:#000000;-webkit-text-stroke:0.15px #000;transform-origin:100% 0;transform:scaleX(1.033);">5,86</span>
<span class="t" style="right:1244.20px;top:641px;font-size:18.8px;color:#000000;-webkit-text-stroke:0.15px #000;transform-origin:100% 0;transform:scaleX(1.033);">6,68</span>
<span class="t" style="right:1124.20px;top:641px;font-size:18.8px;color:#000000;-webkit-text-stroke:0.15px #000;transform-origin:100% 0;transform:scaleX(1.033);">7,1</span>
<span class="t" style="right:1004.20px;top:641px;font-size:18.8px;color:#000000;-webkit-text-stroke:0.15px #000;transform-origin:100% 0;transform:scaleX(1.033);">5,8</span>
<span class="t" style="right:884.20px;top:641px;font-size:18.8px;color:#000000;-webkit-text-stroke:0.15px #000;transform-origin:100% 0;transform:scaleX(1.033);">6,21</span>
<span class="t" style="right:1604.20px;top:699px;font-size:18.8px;color:#000000;-webkit-text-stroke:0.15px #000;transform-origin:100% 0;transform:scaleX(1.033);">20</span>
<span class="t" style="right:1604.20px;top:728px;font-size:18.8px;color:#000000;-webkit-text-stroke:0.15px #000;transform-origin:100% 0;transform:scaleX(1.033);">30</span>
<span class="t" style="right:1604.20px;top:757px;font-size:18.8px;color:#000000;-webkit-text-stroke:0.15px #000;transform-origin:100% 0;transform:scaleX(1.033);">50</span>
<div style="position:absolute;left:0;top:895px;width:33px;height:10px;overflow:hidden;"><span class="t" style="left:4.3px;top:7px;font-size:18.8px;color:#262626;transform:scaleX(0.97);">18</span></div>
<span class="t" style="left:13.30px;top:17px;font-size:19.6px;color:#454443;transform:scaleX(1.0116);">Archivo</span>
<span class="t" style="left:209.73px;top:17px;font-size:19.6px;color:#454443;transform:scaleX(0.9696);">Insertar</span>
<span class="t" style="left:319.60px;top:17px;font-size:19.6px;color:#454443;transform:scaleX(1.0041);">Disposición de página</span>
<span class="t" style="left:556.42px;top:17px;font-size:19.6px;color:#454443;transform:scaleX(0.9832);">Fórmulas</span>
<span class="t" style="left:677.60px;top:17px;font-size:19.6px;color:#454443;">Datos</span>
<span class="t" style="left:770.00px;top:17px;font-size:19.6px;color:#454443;transform:scaleX(0.9015);">Revisar</span>
<span class="t" style="left:872.80px;top:17px;font-size:19.6px;color:#454443;transform:scaleX(0.9398);">Vista</span>
<span class="t" style="left:954.58px;top:17px;font-size:19.6px;color:#454443;transform:scaleX(1.0209);">Programador</span>
<span class="t" style="left:1112.50px;top:17px;font-size:19.6px;color:#454443;">Ayuda</span>
<span class="t" style="left:119.63px;top:17px;font-size:19.6px;color:#323130;transform:scaleX(1.0659);-webkit-text-stroke:0.55px #323130;">Inicio</span>
<span class="t" style="left:1613.77px;top:17px;font-size:19.6px;color:#217346;transform:scaleX(1.0292);-webkit-text-stroke:0.55px #217346;">Comentarios</span>
<span class="t" style="left:1790.74px;top:17px;font-size:19.6px;color:#217346;transform:scaleX(1.0563);-webkit-text-stroke:0.55px #217346;">Compartir</span>
<span class="t" style="left:15.03px;top:114px;font-size:16.8px;color:#b1aeab;transform:scaleX(0.9730);">Pegar</span>
<span class="t" style="left:981.51px;top:113px;font-size:16.8px;color:#454443;transform:scaleX(1.0859);">Formato</span>
<span class="t" style="left:962.60px;top:137px;font-size:16.8px;color:#454443;transform:scaleX(1.0657);">condicional</span>
<span class="t" style="left:1080.90px;top:113px;font-size:16.8px;color:#454443;transform:scaleX(1.1002);">Dar formato</span>
<span class="t" style="left:1076.40px;top:137px;font-size:16.8px;color:#454443;transform:scaleX(1.0706);">como tabla</span>
<span class="t" style="left:1189.96px;top:113px;font-size:16.8px;color:#454443;transform:scaleX(1.0403);">Estilos de</span>
<span class="t" style="left:1199.70px;top:137px;font-size:16.8px;color:#454443;transform:scaleX(0.9660);">celda</span>
<span class="t" style="left:1324.97px;top:63px;font-size:16.8px;color:#454443;transform:scaleX(1.0266);">Insertar</span>
<span class="t" style="left:1324.99px;top:97px;font-size:16.8px;color:#454443;transform:scaleX(1.0096);">Eliminar</span>
<span class="t" style="left:1324.92px;top:130px;font-size:16.8px;color:#454443;transform:scaleX(1.0827);">Formato</span>
<span class="t" style="left:1503.40px;top:113px;font-size:16.8px;color:#454443;transform:scaleX(1.0396);">Ordenar y</span>
<span class="t" style="left:1514.90px;top:137px;font-size:16.8px;color:#454443;transform:scaleX(1.0901);">filtrar</span>
<span class="t" style="left:1608.02px;top:113px;font-size:16.8px;color:#454443;transform:scaleX(0.9817);">Buscar y</span>
<span class="t" style="left:1589.70px;top:137px;font-size:16.8px;color:#454443;transform:scaleX(0.9966);">seleccionar</span>
<span class="t" style="left:1723.20px;top:113px;font-size:16.8px;color:#454443;transform:scaleX(1.0207);">Analizar</span>
<span class="t" style="left:1732.60px;top:137px;font-size:16.8px;color:#454443;transform:scaleX(1.0698);">datos</span>
<span class="t" style="left:6.88px;top:173px;font-size:14.8px;color:#454443;transform:scaleX(1.0175);">Portapapeles</span>
<span class="t" style="left:262.46px;top:173px;font-size:14.8px;color:#454443;transform:scaleX(1.0371);">Fuente</span>
<span class="t" style="left:546.40px;top:173px;font-size:14.8px;color:#454443;transform:scaleX(1.0419);">Alineación</span>
<span class="t" style="left:793.28px;top:173px;font-size:14.8px;color:#454443;transform:scaleX(1.1187);">Número</span>
<span class="t" style="left:1090.49px;top:173px;font-size:14.8px;color:#454443;transform:scaleX(1.0146);">Estilos</span>
<span class="t" style="left:1332.30px;top:173px;font-size:14.8px;color:#454443;transform:scaleX(0.9877);">Celdas</span>
<span class="t" style="left:1543.36px;top:173px;font-size:14.8px;color:#454443;transform:scaleX(1.0359);">Edición</span>
<span class="t" style="left:1727.40px;top:173px;font-size:14.8px;color:#454443;transform:scaleX(1.0259);">Análisis</span>
<span class="t" style="left:151.40px;top:76px;font-size:18.4px;color:#1b1b1b;transform:scaleX(0.9425);">Calibri</span>
<span class="t" style="left:323.89px;top:76px;font-size:18.4px;color:#1b1b1b;transform:scaleX(0.9069);">11</span>
<span class="t" style="left:740.74px;top:76px;font-size:18.4px;color:#1b1b1b;transform:scaleX(0.8627);">Fecha</span>
<span class="t" style="left:154.78px;top:120px;font-size:20px;color:#323130;font-weight:700;transform:scaleX(1.1231);">N</span>
<span class="t" style="left:191.60px;top:121px;font-size:19.5px;color:#3b3a39;font-style:italic;transform:scaleX(0.9429);">K</span>
<span class="t" style="left:226.30px;top:121px;font-size:19.5px;color:#3b3a39;font-style:italic;transform:scaleX(0.8769);">S</span>
<span class="t" style="left:8.00px;top:217px;font-size:18.4px;color:#3a3a3a;transform:scaleX(1.0509);">A2</span>
<span class="t" style="left:383.01px;top:217px;font-size:18.4px;color:#3a3a3a;transform:scaleX(0.9924);">Fecha</span>
<span class="t" style="left:324.40px;top:214px;font-size:22px;color:#6a6a6a;font-weight:700;font-style:italic;font-family:'Liberation Serif', 'DejaVu Serif', serif;transform:scaleX(0.9877);">fx</span>
<span class="t" style="left:125.68px;top:911px;font-size:19.4px;color:#444;transform:scaleX(1.0229);">Hoja1</span>
<span class="t" style="left:205.76px;top:911px;font-size:19.4px;color:#444;transform:scaleX(1.0356);">Notas</span>
<span class="t" style="left:284.10px;top:911px;font-size:19.4px;color:#217346;transform:scaleX(1.0966);-webkit-text-stroke:0.55px #217346;">Hoja3</span>
<span class="t" style="left:365.68px;top:911px;font-size:19.4px;color:#444;transform:scaleX(1.0164);">Hoja4</span>
<span class="t" style="left:3.66px;top:949px;font-size:15.4px;color:#444;transform:scaleX(1.0404);">Listo</span>
<span class="t" style="left:1858.82px;top:949px;font-size:15.4px;color:#444;transform:scaleX(0.9848);">100 %</span>
<span class="t" style="left:104.95px;top:381px;font-size:18.8px;color:#217346;transform:scaleX(0.9300);">A</span>
<span class="t" style="left:242.46px;top:381px;font-size:18.8px;color:#1c1c1c;transform:scaleX(0.9300);">B</span>
<span class="t" style="left:362.45px;top:381px;font-size:18.8px;color:#1c1c1c;transform:scaleX(0.9300);">C</span>
<span class="t" style="left:481.99px;top:381px;font-size:18.8px;color:#1c1c1c;transform:scaleX(0.9300);">D</span>
<span class="t" style="left:602.46px;top:381px;font-size:18.8px;color:#1c1c1c;transform:scaleX(0.9300);">E</span>
<span class="t" style="left:722.92px;top:381px;font-size:18.8px;color:#1c1c1c;transform:scaleX(0.9300);">F</span>
<span class="t" style="left:841.99px;top:381px;font-size:18.8px;color:#1c1c1c;transform:scaleX(0.9300);">G</span>
<span class="t" style="left:961.99px;top:381px;font-size:18.8px;color:#1c1c1c;transform:scaleX(0.9300);">H</span>
<span class="t" style="left:1086.17px;top:381px;font-size:18.8px;color:#1c1c1c;transform:scaleX(0.9300);">I</span>
<span class="t" style="left:1204.78px;top:381px;font-size:18.8px;color:#1c1c1c;transform:scaleX(0.9300);">J</span>
<span class="t" style="left:1321.99px;top:381px;font-size:18.8px;color:#1c1c1c;transform:scaleX(0.9300);">K</span>
<span class="t" style="left:1443.38px;top:381px;font-size:18.8px;color:#1c1c1c;transform:scaleX(0.9300);">L</span>
<span class="t" style="left:1561.06px;top:381px;font-size:18.8px;color:#1c1c1c;transform:scaleX(0.9300);">M</span>
<span class="t" style="left:1681.99px;top:381px;font-size:18.8px;color:#1c1c1c;transform:scaleX(0.9300);">N</span>
<span class="t" style="left:1801.99px;top:381px;font-size:18.8px;color:#1c1c1c;transform:scaleX(0.9300);">O</span>
<span class="t" style="left:7.42px;top:409px;font-size:18.8px;color:#1c1c1c;transform:scaleX(1.0330);">1</span>
<span class="t" style="left:7.94px;top:438px;font-size:18.8px;color:#217346;transform:scaleX(1.0330);">2</span>
<span class="t" style="left:7.94px;top:467px;font-size:18.8px;color:#1c1c1c;transform:scaleX(1.0330);">3</span>
<span class="t" style="left:7.94px;top:496px;font-size:18.8px;color:#1c1c1c;transform:scaleX(1.0330);">4</span>
<span class="t" style="left:7.94px;top:525px;font-size:18.8px;color:#1c1c1c;transform:scaleX(1.0330);">5</span>
<span class="t" style="left:7.94px;top:554px;font-size:18.8px;color:#1c1c1c;transform:scaleX(1.0330);">6</span>
<span class="t" style="left:7.94px;top:583px;font-size:18.8px;color:#1c1c1c;transform:scaleX(1.0330);">7</span>
<span class="t" style="left:7.94px;top:612px;font-size:18.8px;color:#1c1c1c;transform:scaleX(1.0330);">8</span>
<span class="t" style="left:7.94px;top:641px;font-size:18.8px;color:#1c1c1c;transform:scaleX(1.0330);">9</span>
<span class="t" style="left:3.68px;top:670px;font-size:18.8px;color:#1c1c1c;transform:scaleX(1.0234);">10</span>
<span class="t" style="left:3.60px;top:699px;font-size:18.8px;color:#1c1c1c;transform:scaleX(1.1025);">11</span>
<span class="t" style="left:3.68px;top:728px;font-size:18.8px;color:#1c1c1c;transform:scaleX(1.0234);">12</span>
<span class="t" style="left:3.68px;top:757px;font-size:18.8px;color:#1c1c1c;transform:scaleX(1.0234);">13</span>
<span class="t" style="left:3.68px;top:786px;font-size:18.8px;color:#1c1c1c;transform:scaleX(1.0234);">14</span>
<span class="t" style="left:3.68px;top:815px;font-size:18.8px;color:#1c1c1c;transform:scaleX(1.0234);">15</span>
<span class="t" style="left:3.68px;top:844px;font-size:18.8px;color:#1c1c1c;transform:scaleX(1.0234);">16</span>
<span class="t" style="left:3.68px;top:873px;font-size:18.8px;color:#1c1c1c;transform:scaleX(1.0234);">17</span>
<span class="t" style="left:37.02px;top:438px;font-size:18.8px;color:#000000;transform:scaleX(0.9777);-webkit-text-stroke:0.15px #000;">Fecha</span>
<span class="t" style="left:37.50px;top:467px;font-size:18.8px;color:#000000;transform:scaleX(1.1122);-webkit-text-stroke:0.15px #000;">Alumno/Prueba</span>
<span class="t" style="left:37.50px;top:496px;font-size:18.8px;color:#000000;transform:scaleX(1.0358);-webkit-text-stroke:0.15px #000;">Cristina García</span>
<span class="t" style="left:36.94px;top:525px;font-size:18.8px;color:#000000;transform:scaleX(1.0563);-webkit-text-stroke:0.15px #000;">Ismael Carrasco</span>
<span class="t" style="left:36.92px;top:554px;font-size:18.8px;color:#000000;transform:scaleX(1.0809);-webkit-text-stroke:0.15px #000;">Berta Romero</span>
<span class="t" style="left:37.50px;top:583px;font-size:18.8px;color:#000000;transform:scaleX(1.0819);-webkit-text-stroke:0.15px #000;">Antonio López</span>
<span class="t" style="left:37.00px;top:612px;font-size:18.8px;color:#000000;transform:scaleX(1.0155);-webkit-text-stroke:0.15px #000;">Jesús Gómez</span>
<span class="t" style="left:36.90px;top:641px;font-size:18.8px;color:#000000;transform:scaleX(1.0965);-webkit-text-stroke:0.15px #000;">Media</span>
<span class="t" style="left:37.60px;top:699px;font-size:18.8px;color:#000000;transform:scaleX(1.0178);-webkit-text-stroke:0.15px #000;">% Ejercicios</span>
<span class="t" style="left:37.60px;top:728px;font-size:18.8px;color:#000000;transform:scaleX(1.0055);-webkit-text-stroke:0.15px #000;">% Prácticas</span>
<span class="t" style="left:37.60px;top:757px;font-size:18.8px;color:#000000;transform:scaleX(1.0185);-webkit-text-stroke:0.15px #000;">% Exámenes</span>
<span class="t" style="left:192.37px;top:467px;font-size:18.8px;color:#000000;transform:scaleX(1.0330);-webkit-text-stroke:0.15px #000;">Ejercicio 1</span>
<span class="t" style="left:311.87px;top:467px;font-size:18.8px;color:#000000;transform:scaleX(1.0322);-webkit-text-stroke:0.15px #000;">Práctica 1</span>
<span class="t" style="left:431.55px;top:467px;font-size:18.8px;color:#000000;transform:scaleX(1.0471);-webkit-text-stroke:0.15px #000;">Ejercicio 2</span>
<span class="t" style="left:551.75px;top:467px;font-size:18.8px;color:#000000;transform:scaleX(1.0491);-webkit-text-stroke:0.15px #000;">Examen 1</span>
<span class="t" style="left:671.66px;top:467px;font-size:18.8px;color:#000000;transform:scaleX(1.0358);-webkit-text-stroke:0.15px #000;">Práctica 2</span>
<span class="t" style="left:791.85px;top:467px;font-size:18.8px;color:#000000;transform:scaleX(1.0491);-webkit-text-stroke:0.15px #000;">Examen 2</span>
<span class="t" style="left:911.74px;top:467px;font-size:18.8px;color:#000000;transform:scaleX(1.0615);-webkit-text-stroke:0.15px #000;">Evaluación</span>
<span class="t" style="left:1031.64px;top:467px;font-size:18.8px;color:#000000;transform:scaleX(1.0626);-webkit-text-stroke:0.15px #000;">Evaluación</span>
<span class="t" style="left:391.20px;top:67px;font-size:27.4px;color:#3b3a39;transform:scaleX(0.8947);">A</span>
<span class="t" style="left:428.10px;top:72px;font-size:21.0px;color:#3b3a39;transform:scaleX(0.9357);">A</span>
<span class="t" style="left:407.20px;top:117px;font-size:22.8px;color:#3b3a39;transform:scaleX(0.8938);">A</span>
<span class="t" style="left:797.72px;top:116px;font-size:30.6px;color:#3b3a39;transform:scaleX(0.8769);">%</span>
<span class="t" style="left:832.40px;top:123px;font-size:15.9px;color:#5c5b5a;transform:scaleX(0.8547);">000</span>
<span class="t" style="left:885.29px;top:117px;font-size:13.4px;color:#3b3a39;transform:scaleX(1.0082);">,0</span>
<span class="t" style="left:877.37px;top:129px;font-size:13.4px;color:#3b3a39;transform:scaleX(1.0310);">,00</span>
<span class="t" style="left:911.59px;top:117px;font-size:13.4px;color:#3b3a39;transform:scaleX(1.0077);">,00</span>
<span class="t" style="left:918.98px;top:129px;font-size:13.4px;color:#3b3a39;transform:scaleX(1.0185);">,0</span>
<span class="t" style="left:1449.88px;top:53px;font-size:29.4px;color:#3b3a39;transform:scaleX(1.1250);">Σ</span>
<span class="t" style="left:1521.90px;top:57px;font-size:25.2px;color:#2488d8;transform:scaleX(0.8882);">A</span>
<span class="t" style="left:1522.40px;top:79px;font-size:25.2px;color:#3b3a39;transform:scaleX(0.8667);">Z</span>
</body></html>
